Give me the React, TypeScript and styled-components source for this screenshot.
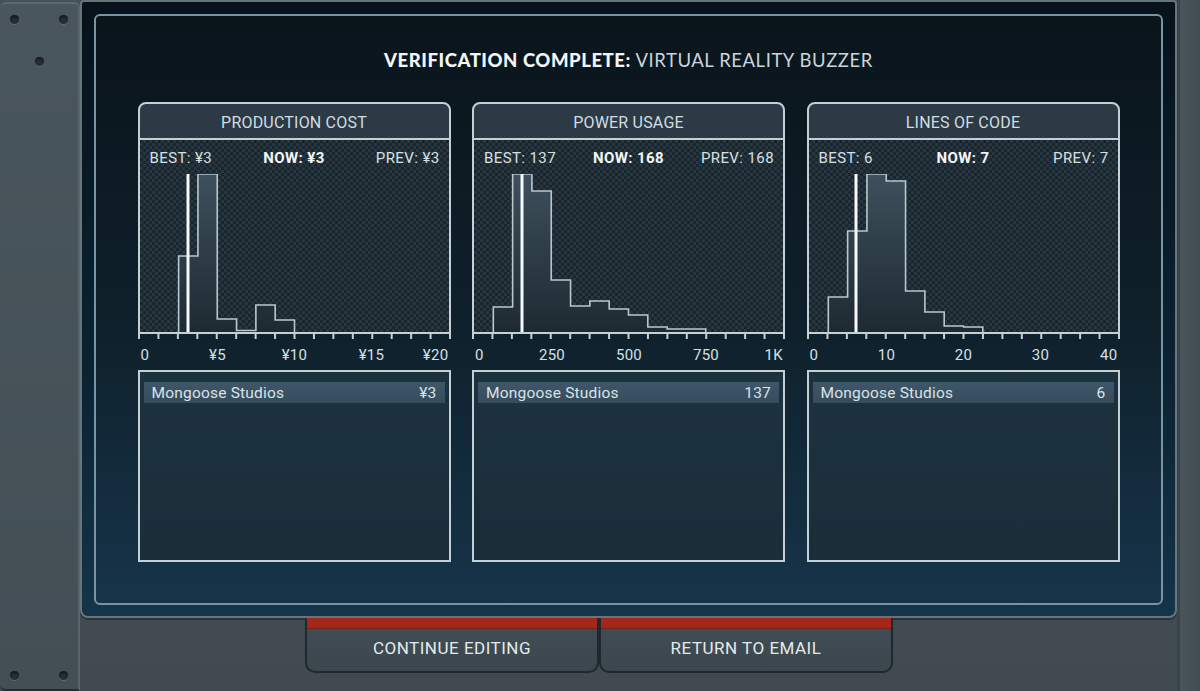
import React from "react";
import styled, { createGlobalStyle } from "styled-components";

const GlobalStyle = createGlobalStyle`
  html, body {
    margin: 0;
    padding: 0;
    background: #3f4a50;
  }
  * {
    box-sizing: border-box;
  }
`;

const LINE = "#c3d1d7";

const Page = styled.div`
  display: flex;
  width: 1200px;
  height: 691px;
  overflow: hidden;
  background: linear-gradient(#465158, #404a50);
  font-family: Roboto, "Liberation Sans", sans-serif;
`;

const Side = styled.div`
  width: 80px;
  height: 689px;
  margin-top: 2px;
  display: flex;
  flex-direction: column;
  justify-content: space-between;
  padding: 11px 10px 9px 10px;
  background: linear-gradient(#4a565d, #434e55);
  border-top: 2px solid #5c6970;
  border-right: 2px solid #58656c;
  border-radius: 6px 6px 0 6px;
  border-bottom: 2px solid #262d31;
`;

const ScrewRow = styled.div<{ $center?: boolean }>`
  display: flex;
  justify-content: ${(p) => (p.$center ? "center" : "space-between")};
  margin-top: ${(p) => (p.$center ? "33px" : "0")};
`;

const Screw = styled.div`
  width: 9px;
  height: 9px;
  border-radius: 50%;
  background: #262e33;
  box-shadow: 0 1px 0 #5d6a71, inset 0 2px 2px #15191c;
`;

const SideTop = styled.div`
  display: flex;
  flex-direction: column;
`;

const Center = styled.div`
  flex: 1;
  display: flex;
  flex-direction: column;
`;

const Screen = styled.div`
  height: 618px;
  padding: 12px 12px 11px 12px;
  border: 2px solid #66747b;
  border-radius: 4px 4px 8px 8px;
  background: linear-gradient(#07121a, #0c2232 60%, #143548);
  box-shadow: 0 2px 0 #2c3439;
`;

const Inner = styled.div`
  height: 100%;
  border: 2px solid #7895a3;
  border-radius: 6px;
  background: linear-gradient(#0a141b, #0f212c 55%, #17344a);
  padding-top: 32px;
  display: flex;
  flex-direction: column;
  align-items: center;
`;

const Title = styled.h1`
  margin: 0;
  height: 24px;
  line-height: 24px;
  font-family: Lato, "Open Sans", sans-serif;
  font-size: 18.5px;
  font-weight: 400;
  letter-spacing: 0.55px;
  color: #c9d5db;
  b {
    font-weight: 900;
    color: #f2f6f8;
  }
`;

const Cards = styled.div`
  display: flex;
  gap: 21.5px;
  margin-top: 30px;
`;

const Card = styled.div`
  width: 313px;
  display: flex;
  flex-direction: column;
  flex-shrink: 0;
`;

const CardHeader = styled.div`
  height: 38px;
  display: flex;
  align-items: center;
  justify-content: center;
  background: #2b3a45;
  border: 2px solid ${LINE};
  border-radius: 8px 8px 0 0;
  color: #d3dde1;
  font-size: 16px;
  letter-spacing: 0.2px;
  padding-top: 3px;
`;

const ChartBody = styled.div`
  height: 192px;
  flex-shrink: 0;
  display: flex;
  flex-direction: column;
  border-left: 2px solid ${LINE};
  border-right: 2px solid ${LINE};
  background-color: #1e2b34;
  background-image: repeating-conic-gradient(#27363f 0 25%, #1a262e 0 50%);
  background-size: 6px 6px;
`;

const Stats = styled.div`
  height: 34px;
  display: flex;
  align-items: center;
  justify-content: space-between;
  padding: 1px 9px 0 10px;
  font-size: 15px;
  letter-spacing: 0.4px;
  color: #d6e0e4;
`;

const Stat = styled.span<{ $bold?: boolean }>`
  font-weight: ${(p) => (p.$bold ? 700 : 400)};
  color: ${(p) => (p.$bold ? "#f2f6f8" : "#d6e0e4")};
`;

const AxisSvg = styled.svg`
  display: block;
  flex-shrink: 0;
`;

const Labels = styled.div`
  display: flex;
  justify-content: space-between;
  height: 16px;
  margin-top: 7px;
  padding: 0 2px 0 3px;
  font-size: 15px;
  letter-spacing: 0.3px;
  line-height: 16px;
  color: #d6e0e4;
`;

const Label = styled.span<{ $align: string }>`
  width: 0;
  display: flex;
  justify-content: ${(p) => p.$align};
  white-space: nowrap;
`;

const List = styled.div`
  height: 192px;
  flex-shrink: 0;
  margin-top: 7px;
  border: 2px solid ${LINE};
  background: linear-gradient(#1d323f, #1a2e3a);
  padding: 10px 4px;
`;

const Row = styled.div`
  height: 21px;
  display: flex;
  align-items: center;
  justify-content: space-between;
  padding: 1px 8px 0 8px;
  background: linear-gradient(#3e5769, #354c5c);
  color: #dae3e7;
  font-size: 15.5px;
  letter-spacing: 0.2px;
`;

const ButtonBar = styled.div`
  display: flex;
  margin-left: 225px;
  width: 588px;
`;

const Button = styled.button`
  flex: 1;
  height: 55px;
  margin: 0;
  padding: 7px 0 0 0;
  border: 2px solid #20282d;
  border-top: none;
  border-radius: 0 0 10px 10px;
  background: linear-gradient(#424e56, #3b464d);
  box-shadow: inset 0 10px 0 #a1281a, inset 0 11px 0 #7a2014;
  color: #e4eaec;
  font-family: Roboto, "Liberation Sans", sans-serif;
  font-size: 17px;
  letter-spacing: 0.5px;
  cursor: pointer;
`;

const RightStrip = styled.div`
  width: 23px;
  border-left: 3px solid #3a4449;
  background: linear-gradient(90deg, #49545b, #434d53);
`;

type ChartData = {
  title: string;
  best: string;
  now: string;
  prev: string;
  bins: number[];
  marker: number;
  labels: string[];
  company: string;
  score: string;
};

const charts: ChartData[] = [
  {
    title: "PRODUCTION COST",
    best: "¥3",
    now: "¥3",
    prev: "¥3",
    bins: [0, 0, 76, 158, 13, 1.5, 27, 12, 0, 0, 0, 0, 0, 0, 0, 0],
    marker: 48,
    labels: ["0", "¥5", "¥10", "¥15", "¥20"],
    company: "Mongoose Studios",
    score: "¥3",
  },
  {
    title: "POWER USAGE",
    best: "137",
    now: "168",
    prev: "168",
    bins: [0, 25, 158, 141, 52, 26, 31, 23, 17, 5, 3, 3, 0, 0, 0, 0],
    marker: 48,
    labels: ["0", "250", "500", "750", "1K"],
    company: "Mongoose Studios",
    score: "137",
  },
  {
    title: "LINES OF CODE",
    best: "6",
    now: "7",
    prev: "7",
    bins: [0, 35, 101, 158, 151, 41, 20, 6, 5, 0, 0, 0, 0, 0, 0, 0],
    marker: 47,
    labels: ["0", "10", "20", "30", "40"],
    company: "Mongoose Studios",
    score: "6",
  },
];

const W = 309;
const H = 158;

const stepPath = (bins: number[]) => {
  const bw = W / bins.length;
  const first = bins.findIndex((b) => b > 0);
  let last = bins.length - 1;
  while (last > 0 && bins[last] === 0) last--;
  let d = `M${(first * bw).toFixed(2)},${H}`;
  for (let i = first; i <= last; i++) {
    const y = (H - bins[i]).toFixed(2);
    d += ` L${(i * bw).toFixed(2)},${y} L${((i + 1) * bw).toFixed(2)},${y}`;
  }
  d += ` L${((last + 1) * bw).toFixed(2)},${H}`;
  return d;
};

const Histogram = ({ data, id }: { data: ChartData; id: string }) => {
  const d = stepPath(data.bins);
  return (
    <svg width={W} height={H} viewBox={`0 0 ${W} ${H}`} style={{ display: "block" }}>
      <defs>
        <linearGradient id={id} x1="0" y1="0" x2="0" y2={H} gradientUnits="userSpaceOnUse">
          <stop offset="0" stopColor="#3e505c" />
          <stop offset="1" stopColor="#1d2a32" />
        </linearGradient>
      </defs>
      <path d={d + " Z"} fill={`url(#${id})`} />
      <path d={d} fill="none" stroke="#b9c8cf" strokeWidth="1.6" />
      <rect x={data.marker - 1.5} y="0" width="3" height={H} fill="#f6f9fa" />
    </svg>
  );
};

const Axis = () => {
  const ticks = Array.from({ length: 17 }, (_, i) => 1 + (i * 311) / 16);
  return (
    <AxisSvg width="313" height="8" viewBox="0 0 313 8">
      <rect x="0" y="0" width="313" height="2" fill={LINE} />
      {ticks.map((x) => (
        <rect key={x} x={x - 1} y="0" width="2" height="7" fill={LINE} />
      ))}
    </AxisSvg>
  );
};

const ChartCard = ({ data, index }: { data: ChartData; index: number }) => {
  const n = data.labels.length;
  return (
    <Card>
      <CardHeader>{data.title}</CardHeader>
      <ChartBody>
        <Stats>
          <Stat>BEST: {data.best}</Stat>
          <Stat $bold>NOW: {data.now}</Stat>
          <Stat>PREV: {data.prev}</Stat>
        </Stats>
        <Histogram data={data} id={`barfill${index}`} />
      </ChartBody>
      <Axis />
      <Labels>
        {data.labels.map((l, i) => (
          <Label key={l} $align={i === 0 ? "flex-start" : i === n - 1 ? "flex-end" : "center"}>
            {l}
          </Label>
        ))}
      </Labels>
      <List>
        <Row>
          <span>{data.company}</span>
          <span>{data.score}</span>
        </Row>
      </List>
    </Card>
  );
};

export default function App() {
  return (
    <>
      <GlobalStyle />
      <Page>
        <Side>
          <SideTop>
            <ScrewRow>
              <Screw />
              <Screw />
            </ScrewRow>
            <ScrewRow $center>
              <Screw />
            </ScrewRow>
          </SideTop>
          <ScrewRow>
            <Screw />
            <Screw />
          </ScrewRow>
        </Side>
        <Center>
          <Screen>
            <Inner>
              <Title>
                <b>VERIFICATION COMPLETE:</b> VIRTUAL REALITY BUZZER
              </Title>
              <Cards>
                {charts.map((c, i) => (
                  <ChartCard key={c.title} data={c} index={i} />
                ))}
              </Cards>
            </Inner>
          </Screen>
          <ButtonBar>
            <Button>CONTINUE EDITING</Button>
            <Button>RETURN TO EMAIL</Button>
          </ButtonBar>
        </Center>
        <RightStrip />
      </Page>
    </>
  );
}
